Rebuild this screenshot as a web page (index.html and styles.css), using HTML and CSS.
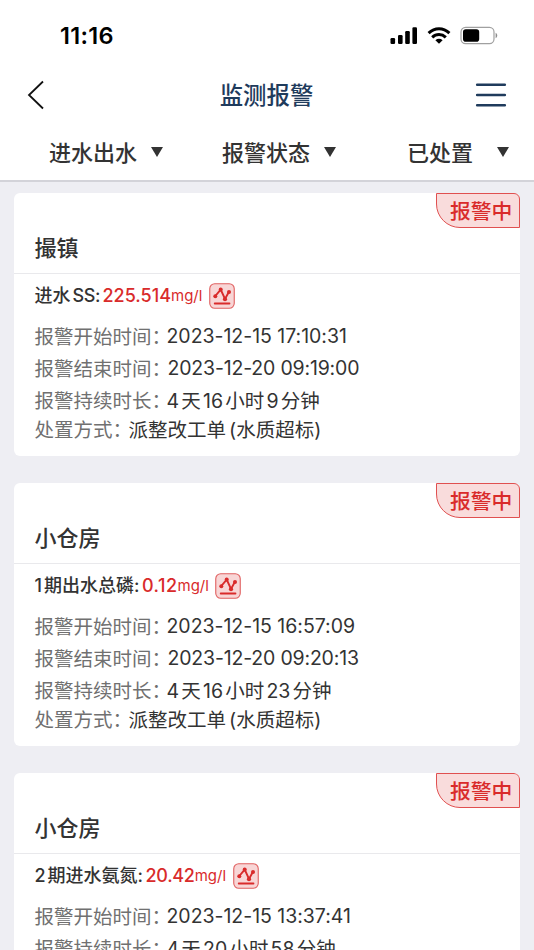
FILE: index.html
```html
<!DOCTYPE html>
<html lang="zh-CN">
  <head>
    <meta charset="UTF-8" />
    <meta name="viewport" content="width=device-width, initial-scale=1.0" />
    <title>监测报警</title>
    <link rel="stylesheet" href="styles.css">
  </head>
  <body>
    <svg class="symbols" aria-hidden="true">
      <symbol id="chart" viewBox="0 0 26 26">
        <rect x="0.75" y="0.75" width="24.5" height="24.5" rx="5" fill="#f8d6d6" stroke="#e06060" stroke-width="1.1" />
        <path d="M6.3 13 L11.7 6.6 L16 16 L20 8.8" fill="none" stroke="#d92b2b" stroke-width="1.9" />
        <g fill="#d92b2b">
          <circle cx="6.3" cy="13.2" r="2" />
          <circle cx="11.7" cy="6.6" r="2" />
          <circle cx="16" cy="16.2" r="2.1" />
          <circle cx="20" cy="9" r="2" />
          <rect x="4.8" y="19.6" width="16.6" height="1.9" rx="0.9" />
        </g>
      </symbol>
    </svg>
    <header>
      <div class="status-bar">
        <span class="time">11:16</span>
        <svg class="status-icons" width="108" height="20" viewBox="0 0 108 20">
          <rect x="0.5" y="12" width="4.6" height="6" rx="1.2" />
          <rect x="8" y="9" width="4.6" height="9" rx="1.2" />
          <rect x="15.2" y="5" width="4.6" height="13" rx="1.2" />
          <rect x="22.4" y="1.2" width="4.6" height="16.8" rx="1.2" />
          <path d="M38.6 7.1 C44.8 1.3 53.2 1.3 59.4 7.1" fill="none" stroke="#000" stroke-width="3.1" />
          <path d="M42.2 11.3 C46.2 7.5 51.8 7.5 55.8 11.3" fill="none" stroke="#000" stroke-width="3" />
          <path d="M45.4 14.2 C47.6 12.3 50.4 12.3 52.6 14.2 L49 17.8 Z" />
          <rect x="71" y="1.3" width="33" height="16.4" rx="4.6" fill="none" stroke="#a0a0a0" stroke-width="1.2" />
          <rect x="73" y="3.3" width="16.2" height="12.4" rx="2.8" />
          <path d="M105.6 6.8 C107.8 7.8 107.8 11.2 105.6 12.2 Z" fill="#8c8c8c" />
        </svg>
      </div>
      <div class="nav">
        <svg class="back" width="18" height="32" viewBox="0 0 18 32">
          <path d="M16 2.5 L2 16 L16 29.5" fill="none" stroke="#111" stroke-width="1.8" />
        </svg>
        <h1>监测报警</h1>
        <svg class="menu" width="32" height="26" viewBox="0 0 32 26">
          <path d="M2.2 2.7 H29.8 M2.2 13 H29.8 M2.2 23.2 H29.8" stroke="#1f3b5c" stroke-width="2.6" stroke-linecap="round" />
        </svg>
      </div>
      <div class="filters">
        <div class="filter">进水出水<i class="arrow"></i></div>
        <div class="filter">报警状态<i class="arrow"></i></div>
        <div class="filter filter-wide">已处置<i class="arrow"></i></div>
      </div>
    </header>
    <main>
      <section class="card">
        <span class="badge">报警中</span>
        <h2>撮镇</h2>
        <div class="body">
          <div class="metric">进水<span class="latin">SS:</span><b>225.514</b><small>mg/l</small><svg class="chart"><use href="#chart" /></svg></div>
          <div class="row"><label>报警开始时间<i>：</i></label><span class="date">2023-12-15 17:10:31</span></div>
          <div class="row end"><label>报警结束时间<i>：</i></label><span class="date">2023-12-20 09:19:00</span></div>
          <div class="row"><label>报警持续时长<i>：</i></label><span class="duration"><i>4</i>天<i>16</i>小时<i>9</i>分钟</span></div>
          <div class="row way"><label>处置方式<i>：</i></label><span>派整改工单<i class="paren">(</i>水质超标<i>)</i></span></div>
        </div>
      </section>
      <section class="card">
        <span class="badge">报警中</span>
        <h2>小仓房</h2>
        <div class="body">
          <div class="metric"><i>1</i>期出水总磷:<b>0.12</b><small>mg/l</small><svg class="chart"><use href="#chart" /></svg></div>
          <div class="row"><label>报警开始时间<i>：</i></label><span class="date">2023-12-15 16:57:09</span></div>
          <div class="row end"><label>报警结束时间<i>：</i></label><span class="date">2023-12-20 09:20:13</span></div>
          <div class="row"><label>报警持续时长<i>：</i></label><span class="duration"><i>4</i>天<i>16</i>小时<i>23</i>分钟</span></div>
          <div class="row way"><label>处置方式<i>：</i></label><span>派整改工单<i class="paren">(</i>水质超标<i>)</i></span></div>
        </div>
      </section>
      <section class="card">
        <span class="badge">报警中</span>
        <h2>小仓房</h2>
        <div class="body">
          <div class="metric"><i>2</i>期进水氨氮:<b>20.42</b><small>mg/l</small><svg class="chart"><use href="#chart" /></svg></div>
          <div class="row"><label>报警开始时间<i>：</i></label><span class="date">2023-12-15 13:37:41</span></div>
          <div class="row"><label>报警持续时长<i>：</i></label><span class="duration"><i>4</i>天<i>20</i>小时<i>58</i>分钟</span></div>
        </div>
      </section>
    </main>
  </body>
</html>
```

FILE: styles.css
```css
* {
  box-sizing: border-box;
}
body {
  margin: 0;
  height: 950px;
  overflow: hidden;
  background-color: #eeeef3;
  font-family: Inter, 'Noto Sans CJK SC', sans-serif;
  color: #333;
}
i {
  font-style: normal;
}
.symbols {
  position: absolute;
  width: 0;
  height: 0;
}
header {
  height: 182px;
  background: #fff;
  border-bottom: 2px solid #d3d3d9;
}
.status-bar {
  display: flex;
  justify-content: space-between;
  align-items: center;
  height: 72px;
  padding: 0 36px 0 60px;
  color: #000;
}
.time {
  margin-bottom: 2px;
  font-size: 23.5px;
  font-weight: 600;
  letter-spacing: 0.3px;
}
.nav {
  display: flex;
  justify-content: space-between;
  align-items: center;
  height: 46px;
  padding: 0 27px;
}
h1 {
  margin: 0 0 2px 13px;
  font-size: 23.4px;
  font-weight: 500;
  color: #1f3b5c;
}
.filters {
  display: flex;
  height: 62px;
  padding: 4px 0 0 49px;
  align-items: center;
}
.filter {
  display: flex;
  align-items: center;
  width: 173px;
  height: 30px;
  font-size: 22px;
  font-weight: 500;
  white-space: nowrap;
}
.filter:last-child {
  margin-left: 12px;
  width: auto;
}
.arrow {
  margin: 2px 0 0 14px;
  border: 6px solid transparent;
  border-top: 10px solid #333;
  border-bottom: 0;
}
.filter-wide .arrow {
  margin-left: 24px;
}
main {
  padding: 11px 14px 0;
}
.card {
  position: relative;
  height: 263px;
  margin-bottom: 27px;
  background: #fff;
  border-radius: 6px;
}
.card:last-child {
  height: 177px;
  margin-bottom: 0;
  border-radius: 6px 6px 0 0;
  overflow: hidden;
}
.badge {
  position: absolute;
  top: 0;
  right: 0;
  width: 84px;
  height: 35px;
  padding: 1px 0 0 13px;
  border: 1px solid #e05050;
  border-radius: 0 6px 0 24px;
  background: #f9dcdc;
  color: #d92b2b;
  font-size: 20.8px;
  font-weight: 500;
  line-height: 34px;
  white-space: nowrap;
}
h2 {
  height: 81px;
  margin: 0;
  padding: 38px 20.5px 0;
  border-bottom: 1px solid #e9e9ec;
  font-size: 22px;
  font-weight: 500;
  line-height: 34px;
}
.body {
  padding: 6px 20.5px 0;
}
.metric {
  display: flex;
  align-items: center;
  height: 32px;
  margin-bottom: 8px;
  font-size: 18px;
  line-height: 20px;
  font-weight: 500;
  white-space: nowrap;
}
.metric i {
  margin-right: 2px;
}
.latin {
  margin-left: 2px;
  letter-spacing: -0.4px;
}
.metric b {
  margin-left: 2.5px;
  font-weight: 500;
  color: #d92b2b;
}
.card:nth-child(2) b {
  letter-spacing: 0.5px;
}
.card:nth-child(3) b {
  letter-spacing: -0.3px;
}
.metric small {
  font-size: 15px;
  font-weight: 400;
  color: #d92b2b;
}
.chart {
  width: 26px;
  height: 26px;
  margin-left: 6.5px;
}
.row {
  display: flex;
  align-items: center;
  height: 32px;
  font-size: 19.5px;
  line-height: 22px;
  white-space: nowrap;
}
.row label {
  width: 132px;
  padding-top: 1px;
  color: #707070;
}
/* trim the empty right half of the full-width colon */
.row label i {
  letter-spacing: -6px;
}
.date {
  letter-spacing: -0.03px;
}
.row.end span {
  margin-left: 1px;
  letter-spacing: -0.18px;
}
.duration {
  padding-top: 1px;
}
.duration i {
  margin: 0 2.2px;
}
.duration i:first-child {
  margin-left: 0;
}
.way {
  height: 27px;
}
.way label {
  width: 94px;
}
.paren {
  margin-left: 3px;
}
```
